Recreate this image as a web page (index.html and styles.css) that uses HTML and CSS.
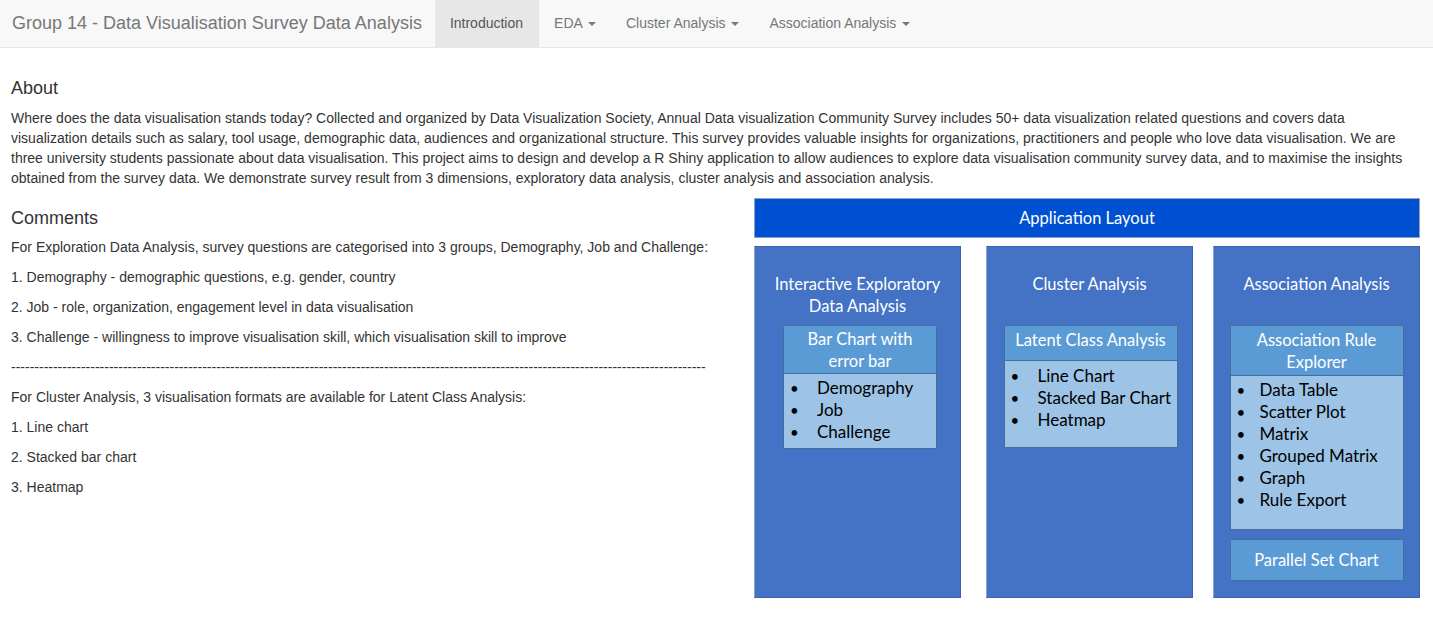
FILE: index.html
```html
<!DOCTYPE html>
<html>
<head>
<meta charset="utf-8">
<title>Group 14 - Data Visualisation Survey Data Analysis</title>
<link rel="stylesheet" href="styles.css">
</head>
<body>
<nav class="navbar">
  <span class="brand">Group 14 - Data Visualisation Survey Data Analysis</span>
  <ul class="nav">
    <li class="active"><a>Introduction</a></li>
    <li><a>EDA <span class="caret"></span></a></li>
    <li><a>Cluster Analysis <span class="caret"></span></a></li>
    <li><a>Association Analysis <span class="caret"></span></a></li>
  </ul>
</nav>
<main class="content">
  <h4>About</h4>
  <p>Where does the data visualisation stands today? Collected and organized by Data Visualization Society, Annual Data visualization Community Survey includes 50+ data visualization related questions and covers data visualization details such as salary, tool usage, demographic data, audiences and organizational structure. This survey provides valuable insights for organizations, practitioners and people who love data visualisation. We are three university students passionate about data visualisation. This project aims to design and develop a R Shiny application to allow audiences to explore data visualisation community survey data, and to maximise the insights obtained from the survey data. We demonstrate survey result from 3 dimensions, exploratory data analysis, cluster analysis and association analysis.</p>
  <div class="row">
    <section class="comments">
      <h4>Comments</h4>
      <p>For Exploration Data Analysis, survey questions are categorised into 3 groups, Demography, Job and Challenge:</p>
      <p>1. Demography - demographic questions, e.g. gender, country</p>
      <p>2. Job - role, organization, engagement level in data visualisation</p>
      <p>3. Challenge - willingness to improve visualisation skill, which visualisation skill to improve</p>
      <p class="dashes">-----------------------------------------------------------------------------------------------------------------------------------------------------</p>
      <p>For Cluster Analysis, 3 visualisation formats are available for Latent Class Analysis:</p>
      <p>1. Line chart</p>
      <p>2. Stacked bar chart</p>
      <p>3. Heatmap</p>
    </section>
    <figure class="diagram">
      <div class="topbar">Application Layout</div>
      <div class="cols">
        <div class="col">
          <div class="col-title">Interactive Exploratory<br>Data Analysis</div>
          <div class="inner w153 shift5">
            <div class="inner-head">Bar Chart with<br>error bar</div>
            <ul class="inner-list">
              <li>Demography</li>
              <li>Job</li>
              <li>Challenge</li>
            </ul>
          </div>
        </div>
        <div class="col gap25">
          <div class="col-title">Cluster Analysis</div>
          <div class="inner w173 shift1">
            <div class="inner-head one">Latent Class Analysis</div>
            <ul class="inner-list tall">
              <li>Line Chart</li>
              <li>Stacked Bar Chart</li>
              <li>Heatmap</li>
            </ul>
          </div>
        </div>
        <div class="col gap20">
          <div class="col-title">Association Analysis</div>
          <div class="inner w173">
            <div class="inner-head two">Association Rule<br>Explorer</div>
            <ul class="inner-list assoc">
              <li>Data Table</li>
              <li>Scatter Plot</li>
              <li>Matrix</li>
              <li>Grouped Matrix</li>
              <li>Graph</li>
              <li>Rule Export</li>
            </ul>
          </div>
          <div class="inner w173 single">Parallel Set Chart</div>
        </div>
      </div>
    </figure>
  </div>
</main>
</body>
</html>
```

FILE: styles.css
```css
html, body {
  margin: 0;
  padding: 0;
}
body {
  font-family: "Liberation Sans", Arial, sans-serif;
  font-size: 14px;
  line-height: 20px;
  color: #333;
  background: #fff;
}
.navbar {
  display: flex;
  align-items: stretch;
  height: 48px;
  background: #f8f8f8;
  border-bottom: 1px solid #e7e7e7;
  box-sizing: border-box;
}
.brand {
  padding: 0 13px 0 12px;
  font-size: 18px;
  line-height: 47px;
  color: #777;
}
.nav {
  display: flex;
  margin: 0;
  padding: 0;
  list-style: none;
}
.nav li a {
  display: block;
  padding: 0 15px;
  line-height: 47px;
  color: #777;
}
.nav li.active a {
  padding: 0 16px 0 15px;
  background: #e7e7e7;
  color: #555;
}
.caret {
  display: inline-block;
  width: 0;
  height: 0;
  margin-left: 2px;
  vertical-align: middle;
  border-top: 4px solid #777;
  border-left: 4px solid transparent;
  border-right: 4px solid transparent;
}
.content {
  padding: 20px 13px 0 11px;
}
h4 {
  margin: 10px 0;
  font-size: 18px;
  font-weight: 500;
  line-height: 20px;
}
p {
  margin: 0 0 10px;
}
.row {
  display: flex;
  justify-content: space-between;
  align-items: flex-start;
}
.comments {
  flex: 1;
  min-width: 0;
}
.comments h4 {
  margin-bottom: 9px;
}
.comments p {
  white-space: nowrap;
}

/* diagram */
.diagram {
  margin: 0;
  width: 666px;
  height: 400px;
  flex: none;
  font-family: Lato, "Open Sans", sans-serif;
  color: #fff;
}
.topbar {
  box-sizing: border-box;
  height: 40px;
  background: #0050d2;
  border: 1px solid #8ea2c8;
  text-align: center;
  font-size: 16.5px;
  line-height: 38px;
}
.cols {
  display: flex;
  margin-top: 8px;
}
.col {
  box-sizing: border-box;
  width: 207px;
  height: 352px;
  background: #4472c4;
  border: 1px solid #3b63ad;
  border-left-color: #8aa3d3;
  display: flex;
  flex-direction: column;
  align-items: center;
}
.gap25 { margin-left: 25px; }
.gap20 { margin-left: 20px; }
.col-title {
  box-sizing: border-box;
  height: 78px;
  padding-top: 26px;
  text-align: center;
  font-size: 16.5px;
  line-height: 22px;
}
.inner {
  box-sizing: border-box;
  background: #9dc3e6;
  border: 1px solid #41719c;
}
.w153 { width: 154px; }
.w173 { width: 174px; }
.shift5 { margin-left: 5px; }
.shift1 { margin-left: 2px; }
.inner-head {
  background: #5b9bd5;
  border-bottom: 1px solid #41719c;
  text-align: center;
  font-size: 16.5px;
  line-height: 22px;
  padding: 2px 0 1px;
}
.inner-head.one {
  padding: 3px 0 9px;
}
.inner-head.two {
  padding: 3px 0 2px;
}
.inner-list {
  margin: 0;
  padding: 3px 0 5px;
  list-style: none;
  color: #000;
  font-size: 17px;
  line-height: 22px;
}
.inner-list li {
  position: relative;
  padding-left: 33px;
}
.inner-list li::before {
  content: "\2022";
  position: absolute;
  left: 6px;
  font-size: 15px;
}
.inner-list.tall {
  padding: 4px 0 16px;
}
.inner-list.assoc {
  padding-bottom: 18px;
}
.inner-list.assoc li {
  padding-left: 29px;
}
.single {
  margin-top: 9px;
  height: 42px;
  background: #5b9bd5;
  text-align: center;
  font-size: 16.5px;
  line-height: 40px;
}
```
